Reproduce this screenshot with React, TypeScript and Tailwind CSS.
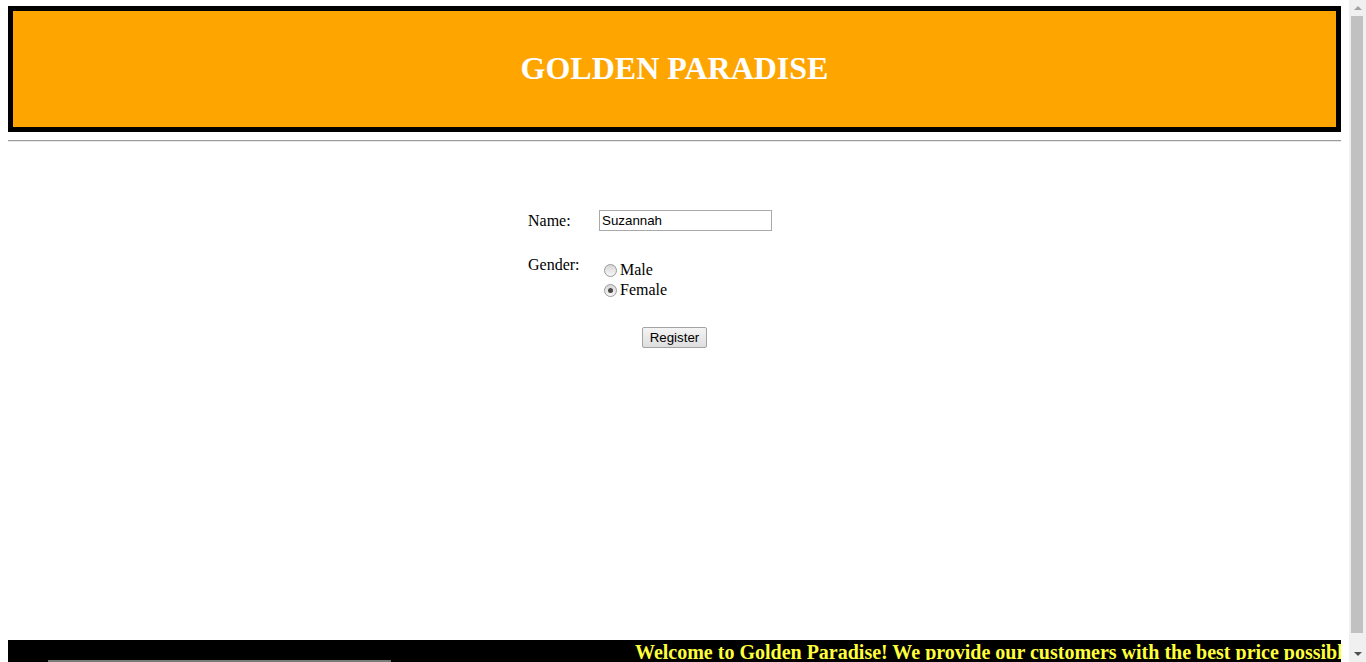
import { useState } from "react";

function Radio({ checked, label, onClick }: { checked: boolean; label: string; onClick: () => void }) {
  return (
    <label className="flex items-center h-[20px] cursor-default" onClick={onClick}>
      <span className="ml-[5px] mr-[3px] w-[13px] h-[13px] rounded-full border border-[#9a9a9a] bg-gradient-to-b from-[#d6d6d6] to-[#f7f7f7] flex items-center justify-center">
        {checked && <span className="w-[5px] h-[5px] rounded-full bg-[#4a4a4a]" />}
      </span>
      <span>{label}</span>
    </label>
  );
}

export default function App() {
  const [name, setName] = useState("Suzannah");
  const [gender, setGender] = useState("female");

  return (
    <div className="flex h-[662px] overflow-hidden bg-white font-['Liberation_Serif',serif] text-[16px] text-black">
      <div className="w-[1349px] flex flex-col px-[8px]">
        <header className="mt-[6px] h-[126px] border-[5px] border-black bg-[#ffa500] flex items-center justify-center">
          <h1 className="text-[32px] font-bold text-white leading-none -mt-[2px]">GOLDEN PARADISE</h1>
        </header>

        <div className="mt-[8px] border-t border-[#9c9c9c] border-b border-b-[#e8e8e8]" />

        <form
          className="flex flex-col"
          onSubmit={(e) => e.preventDefault()}
        >
          <div className="mt-[68px] ml-[520px] flex items-center h-[21px]">
            <span className="w-[71px]">Name:</span>
            <input
              className="w-[173px] h-[21px] border border-[#a9a9a9] px-[2px] font-['Liberation_Sans',sans-serif] text-[13.33px] outline-none"
              value={name}
              onChange={(e) => setName(e.target.value)}
            />
          </div>

          <div className="mt-[25px] ml-[520px] flex">
            <span className="w-[71px] leading-[18px]">Gender:</span>
            <div className="flex flex-col pt-[4px]">
              <Radio checked={gender === "male"} label="Male" onClick={() => setGender("male")} />
              <Radio checked={gender === "female"} label="Female" onClick={() => setGender("female")} />
            </div>
          </div>

          <div className="mt-[27px] flex justify-center">
            <button
              type="submit"
              className="h-[21px] px-[7px] border border-[#a3a3a3] rounded-[2px] bg-gradient-to-b from-[#f4f4f4] to-[#dedede] font-['Liberation_Sans',sans-serif] text-[13.33px] leading-none"
            >
              Register
            </button>
          </div>
        </form>

        <div className="flex-1" />

        <footer className="h-[22px] bg-black flex flex-col overflow-hidden">
          <div className="h-[20px] overflow-hidden whitespace-nowrap">
            <span className="ml-[627px] text-[20px] font-bold leading-[24px] text-[#ffff3c]">
              Welcome to Golden Paradise! We provide our customers with the best price possible on all of our products.
            </span>
          </div>
          <div className="h-[2px] flex">
            <div className="ml-[40px] w-[343px] bg-[#7a7a7a]" />
          </div>
        </footer>
      </div>

      <div className="w-[17px] bg-[#f0f0f0] flex flex-col">
        <div className="h-[15px] flex items-center justify-center">
          <span className="w-0 h-0 border-l-[4px] border-r-[4px] border-b-[4px] border-l-transparent border-r-transparent border-b-[#a3a3a3]" />
        </div>
        <div className="flex-1 ml-[2px] mr-[3px] mt-[1px] mb-[12px] bg-[#c1c1c1]" />
        <div className="h-[17px] flex items-center justify-center">
          <span className="w-0 h-0 border-l-[4px] border-r-[4px] border-t-[4px] border-l-transparent border-r-transparent border-t-[#505050]" />
        </div>
      </div>
    </div>
  );
}
